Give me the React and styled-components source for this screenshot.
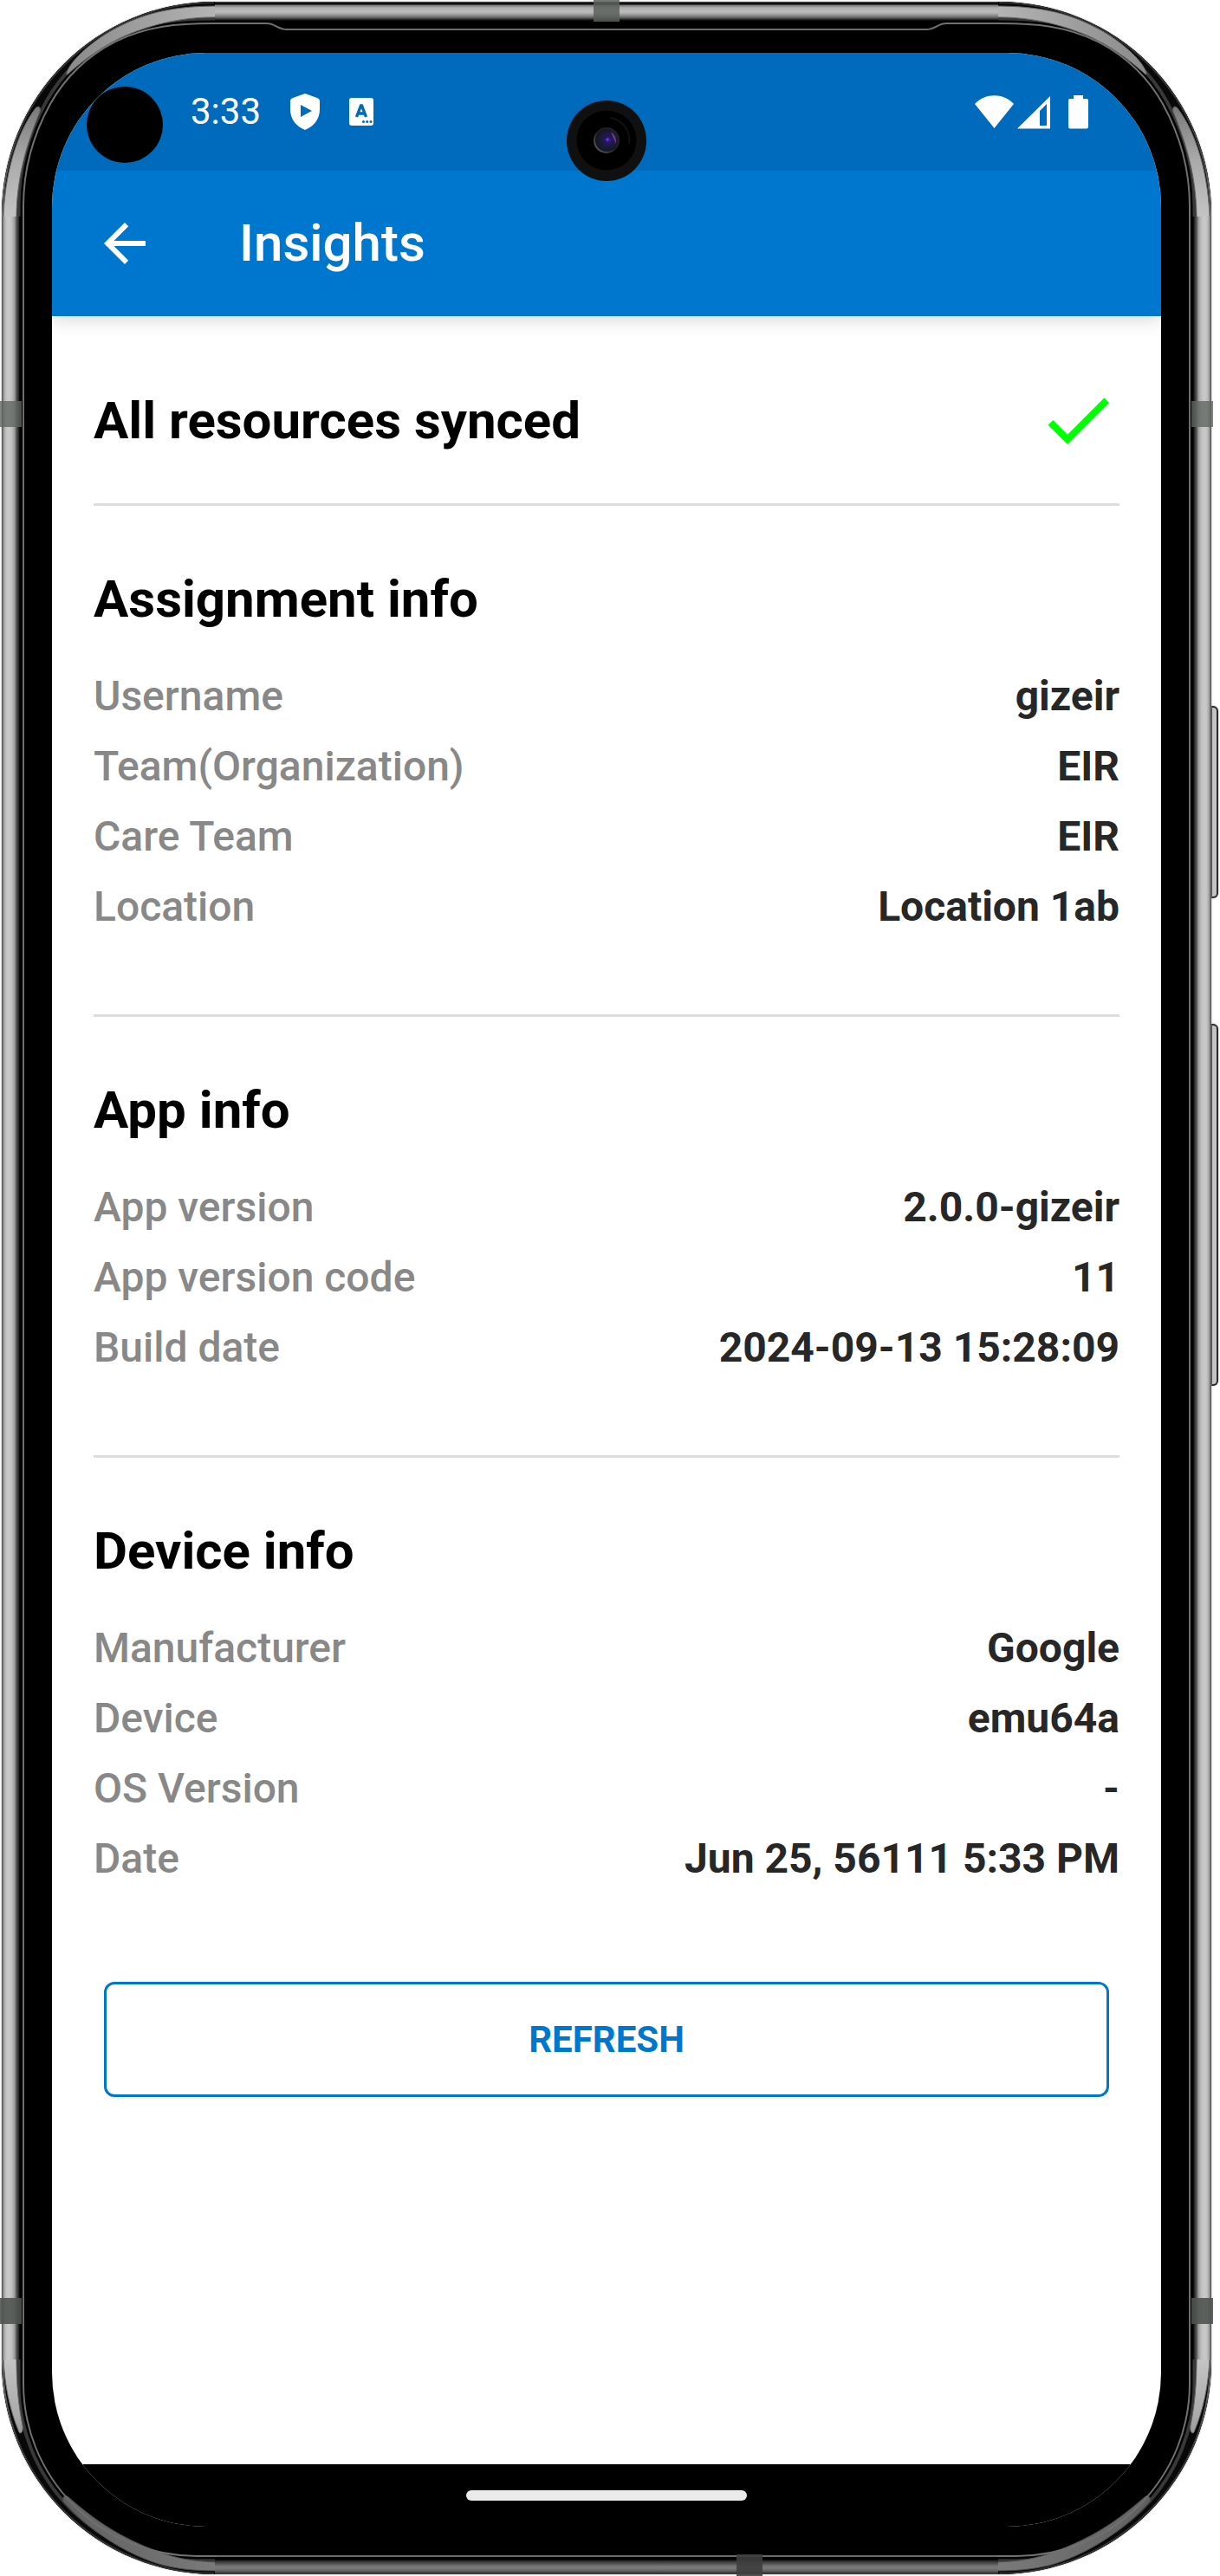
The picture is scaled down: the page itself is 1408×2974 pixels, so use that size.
import React from 'react';
import styled, { createGlobalStyle } from 'styled-components';

const GlobalStyle = createGlobalStyle`
  * { box-sizing: border-box; }
  body { margin: 0; background: #fff; font-family: Roboto, "Liberation Sans", sans-serif; }
`;

/* ---------- phone hardware ---------- */

const Device = styled.div`
  position: relative;
  display: flex;
  min-height: 100vh;
  margin-right: 8px;
  padding: 2px;
`;

const Chassis = styled.div`
  position: relative;
  display: flex;
  flex: 1;
  min-width: 0;
  padding: 59px 58px 55px;
  overflow: hidden;
  border-radius: 245px;
  box-shadow: 0 0 2px #8a8a8a;
  background:
    linear-gradient(#6a6a6a, #6a6a6a) center 31px / calc(100% - 656px) 2px no-repeat,
    linear-gradient(to bottom, #555 0, #000 2px, #111 3px, #777 4px, #b0b0b0 7px, #bcbcbc 12px, #9a9a9a 15px, #6a6a6a 18px, #333 20px, #000 22px) center top / calc(100% - 490px) 22px no-repeat,
    linear-gradient(to top, #555 0, #2a2a2a 1px, #555 3px, #757575 6px, #7a7a7a 9px, #555 12px, #333 15px, #000 17px, #000 20px, #6a6a6a 20px, #6a6a6a 22px) center bottom / calc(100% - 490px) 22px no-repeat,
    linear-gradient(to right, #666 0, #555 1px, #999 2px, #c2c2c2 5px, #cacaca 8px, #bcbcbc 12px, #999 15px, #555 17px, #333 19px, #000 21px, #000 24px, #6e6e6e 24px, #6e6e6e 26px, #000 26px) left center / 28px calc(100% - 490px) no-repeat,
    linear-gradient(to left, #666 0, #555 1px, #999 2px, #c2c2c2 5px, #cacaca 8px, #bcbcbc 12px, #999 15px, #555 17px, #333 19px, #000 21px, #000 24px, #6e6e6e 24px, #6e6e6e 26px, #000 26px) right center / 28px calc(100% - 490px) no-repeat,
    #000;
`;

const CornerArt = styled.svg`
  position: absolute;
  width: 330px;
  height: 248px;
  ${(p) => (p.$bottom ? 'bottom: 0;' : 'top: 0;')}
  ${(p) => (p.$right ? 'right: 0;' : 'left: 0;')}
  transform: scale(${(p) => (p.$right ? -1 : 1)}, ${(p) => (p.$bottom ? -1 : 1)});
`;

const AntennaBand = styled.span`
  position: absolute;
  background: ${(p) => p.$tone};
  ${(p) => (p.$horizontal ? 'width: 30px; height: 25px;' : 'width: 25px; height: 30px;')}
  ${(p) => p.$edge}: 0;
  ${(p) => p.$from}: ${(p) => p.$at};
`;

const SideKey = styled.span`
  position: absolute;
  right: -6px;
  top: ${(p) => p.$top}px;
  width: 9px;
  height: ${(p) => p.$length}px;
  border: 2px solid #2b2b2b;
  border-left-color: #444;
  border-radius: 0 6px 6px 0;
  background: #c4c4c4;
  box-shadow: 0 0 2px #999;
`;

/* ---------- screen ---------- */

const Screen = styled.div`
  position: relative;
  display: flex;
  flex-direction: column;
  flex: 1;
  min-width: 0;
  overflow: hidden;
  border-radius: 178px;
  background: #fff;
`;

const StatusBar = styled.div`
  display: flex;
  align-items: center;
  justify-content: space-between;
  height: 136px;
  padding: 0 84px 0 160px;
  background: #006bbc;
  color: #fff;
`;

const StatusGroup = styled.div`
  display: flex;
  align-items: center;
  gap: ${(p) => p.$gap}px;
`;

const Clock = styled.span`
  font-size: 42px;
  line-height: 50px;
`;

const Cutout = styled.span`
  position: absolute;
  top: 39px;
  left: 40px;
  width: 88px;
  height: 88px;
  border-radius: 50%;
  background: #000;
`;

const CameraArt = styled.svg`
  position: absolute;
  top: 55px;
  left: calc(50% - 46px);
  width: 92px;
  height: 93px;
`;

const AppBar = styled.header`
  position: relative;
  display: flex;
  align-items: center;
  gap: 96px;
  height: 168px;
  padding: 0 48px;
  background: #0077cf;
  color: #fff;
  box-shadow: 0 4px 20px rgba(0, 0, 0, 0.16);
  clip-path: inset(0 0 -28px 0);
`;

const BackButton = styled.button`
  display: flex;
  padding: 0;
  border: 0;
  background: none;
  color: inherit;
  cursor: pointer;
`;

const Title = styled.h1`
  margin: 0;
  font-size: 60px;
  font-weight: 500;
  line-height: 70px;
`;

const Content = styled.main`
  flex: 1;
  padding: 0 48px;
`;

const SyncStatus = styled.section`
  display: flex;
  align-items: center;
  justify-content: space-between;
  padding: 72px 0 48px;
`;

const Heading = styled.h2`
  margin: 0;
  font-size: 60px;
  font-weight: 700;
  line-height: 71px;
  color: #000;
`;

const InfoSection = styled.section`
  padding: 72px 0 84px;
  border-top: 3px solid #ddd;
`;

const InfoList = styled.dl`
  margin: 36px 0 0;
`;

const InfoRow = styled.div`
  display: flex;
  justify-content: space-between;
  font-size: 48px;
  line-height: 81px;
`;

const Label = styled.dt`
  font-weight: 500;
  color: #888;
`;

const Value = styled.dd`
  margin: 0;
  font-weight: 700;
  color: #272727;
`;

const RefreshArea = styled.div`
  display: flex;
  padding: 18px 12px;
`;

const RefreshButton = styled.button`
  flex: 1;
  height: 133px;
  border: 3px solid #0077cf;
  border-radius: 12px;
  background: #fff;
  color: #0077cf;
  font-family: inherit;
  font-size: 42px;
  font-weight: 700;
  line-height: 50px;
  cursor: pointer;
`;

const NavigationBar = styled.div`
  display: flex;
  justify-content: center;
  align-items: center;
  height: 72px;
  background: #000;
`;

const HomeHandle = styled.span`
  width: 324px;
  height: 12px;
  border-radius: 6px;
  background: #ebebeb;
`;

/* ---------- drawings ---------- */

const TOP_SEAM = 'M27 250V238C27 200 36 160 58 120C76 88 102 64 133 48C170 30 205 27 245 27H250';
const BOTTOM_SEAM = 'M27 250V222A200 199 0 0 1 227 23H250';

function Corner({ bottom, right }) {
  const id = `corner-${bottom ? 'b' : 't'}${right ? 'r' : 'l'}`;
  const seam = bottom ? BOTTOM_SEAM : TOP_SEAM;
  return (
    <CornerArt $bottom={bottom} $right={right} viewBox="2 2 330 248" aria-hidden="true">
      <defs>
        <linearGradient id={`${id}-side`} gradientUnits="userSpaceOnUse" x1="0" y1="250" x2="0" y2="120">
          <stop offset="0" stopColor="#c4c4c4" />
          <stop offset="0.5" stopColor="#aaa" />
          <stop offset="1" stopColor="#777" />
        </linearGradient>
        <linearGradient id={`${id}-end`} gradientUnits="userSpaceOnUse" x1="250" y1="0" x2="75" y2="0">
          <stop offset="0" stopColor={bottom ? '#7a7a7a' : '#b4b4b4'} />
          <stop offset="1" stopColor={bottom ? '#606060' : '#8a8a8a'} />
        </linearGradient>
        <linearGradient id={`${id}-rim`} gradientUnits="userSpaceOnUse" x1="0" y1="250" x2="0" y2="130">
          <stop offset="0" stopColor="#707070" />
          <stop offset="1" stopColor="#333" />
        </linearGradient>
        <clipPath id={`${id}-clip`}>
          <rect x="2" y="2" width="246" height="248" />
        </clipPath>
      </defs>
      <g clipPath={`url(#${id}-clip)`}>
        <path d="M2 250V247A245 245 0 0 1 247 2H250V250Z" fill="#080808" />
        <path d={seam} fill="none" stroke="#383838" strokeWidth="15" />
        <path d={`${seam}V250Z`} fill="#000" stroke="#000" strokeWidth="7" />
        <path d="M3 250V247A244 244 0 0 1 247 3" fill="none" stroke={`url(#${id}-rim)`} strokeWidth="2" />
        {bottom ? (
          <>
            <path d="M4 252C5 222 11 192 22 166C25 163 27 168 26 174C21 198 19 222 19 252Z" fill={`url(#${id}-side)`} stroke="#666" strokeWidth="1" />
            <path d="M73 86C100 55 145 24 190 12C212 7 230 6 252 6V16C222 17 205 20 183 28C140 44 112 62 78 92C74 94 71 89 73 86Z" fill={`url(#${id}-end)`} stroke="#4a4a4a" strokeWidth="1" />
          </>
        ) : (
          <>
            <path d="M4 252C5 205 18 155 41 125C45 121 47 124 46 129C31 165 19 205 19 252Z" fill={`url(#${id}-side)`} stroke="#666" strokeWidth="1" />
            <path d="M77 84C82 68 110 45 133 33C170 13 205 7 252 7V20C215 19 178 27 145 41C120 52 98 68 80 84Q76 88 77 84Z" fill={`url(#${id}-end)`} stroke="#666" strokeWidth="1" />
          </>
        )}
      </g>
      <path
        d={bottom ? seam : `${seam}H308C318 27 320 34 332 34`}
        fill="none"
        stroke="#707070"
        strokeWidth="2"
      />
    </CornerArt>
  );
}

function Camera() {
  return (
    <CameraArt viewBox="0 0 92 93" aria-hidden="true">
      <defs>
        <radialGradient id="lens" cx="0.56" cy="0.48" r="0.55">
          <stop offset="0" stopColor="#4a1cb0" />
          <stop offset="0.25" stopColor="#261660" />
          <stop offset="0.6" stopColor="#1a1a34" />
          <stop offset="1" stopColor="#10151c" />
        </radialGradient>
        <linearGradient id="lensRim" x1="0" y1="1" x2="1" y2="0">
          <stop offset="0" stopColor="#666" />
          <stop offset="0.5" stopColor="#1c1c1c" />
          <stop offset="1" stopColor="#2a2030" />
        </linearGradient>
      </defs>
      <ellipse cx="46" cy="46.5" rx="46" ry="46.5" fill="#101010" />
      <circle cx="46" cy="46" r="34.5" fill="#000" />
      <path d="M50 20A26 26 0 0 1 72 50" fill="none" stroke="#101010" strokeWidth="2" />
      <circle cx="46" cy="46" r="14" fill="url(#lens)" stroke="url(#lensRim)" strokeWidth="2" />
      <path d="M51 36Q58 41 57 50Q53 42 51 36Z" fill="#8c4a9c" opacity="0.7" />
      <circle cx="47" cy="45" r="1.500" fill="#6a3cf0" />
    </CameraArt>
  );
}

const ShieldIcon = () => (
  <svg width="34" height="42" viewBox="0 0 34 42" aria-hidden="true">
    <path fill="#fff" fillRule="evenodd" d="M17 0L31 5Q34 6 34 9V18C34 30 27 38 17 42C7 38 0 30 0 18V9Q0 6 3 5ZM12 13V27L25 20Z" />
  </svg>
);

const KeyboardIcon = () => (
  <svg width="28" height="32" viewBox="0 0 28 32" aria-hidden="true">
    <rect width="28" height="32" rx="3" fill="#fff" />
    <path d="M8.500 22L13.500 9H14.500L19.500 22M10 18H18" fill="none" stroke="#006bbc" strokeWidth="3.400" />
    <g fill="#006bbc">
      <circle cx="16.500" cy="27.500" r="1.500" />
      <circle cx="20.700" cy="27.500" r="1.500" />
      <circle cx="25" cy="27.500" r="1.500" />
    </g>
  </svg>
);

const WifiIcon = () => (
  <svg width="45" height="39" viewBox="0 0 45 39" aria-hidden="true">
    <path fill="#fff" d="M0 10C12-3 33-3 45 10L22.500 38Z" />
  </svg>
);

const SignalIcon = () => (
  <svg width="38" height="39" viewBox="0 0 38 39" aria-hidden="true">
    <path fill="#fff" fillRule="evenodd" d="M38 1V38.500H0ZM34 10L26 18V35H34Z" />
  </svg>
);

const BatteryIcon = () => (
  <svg width="40" height="39" viewBox="0 0 40 39" aria-hidden="true">
    <path fill="#fff" d="M23 0H34V4H38Q40 4 40 6V36Q40 38.500 38 38.500H19Q17 38.500 17 36V6Q17 4 19 4H23Z" />
  </svg>
);

const BackIcon = () => (
  <svg width="72" height="72" viewBox="0 0 24 24" aria-hidden="true">
    <path fill="currentColor" d="M20 11H7.830l5.590-5.590L12 4l-8 8 8 8 1.410-1.410L7.830 13H20v-2z" />
  </svg>
);

const CheckIcon = () => (
  <svg width="96" height="96" viewBox="0 0 24 24" role="img" aria-label="Synced">
    <path fill="#0f0" d="M9 16.170L4.830 12l-1.420 1.410L9 19 21 7l-1.410-1.410z" />
  </svg>
);

/* ---------- data ---------- */

const sections = [
  {
    title: 'Assignment info',
    rows: [
      ['Username', 'gizeir'],
      ['Team(Organization)', 'EIR'],
      ['Care Team', 'EIR'],
      ['Location', 'Location 1ab'],
    ],
  },
  {
    title: 'App info',
    rows: [
      ['App version', '2.0.0-gizeir'],
      ['App version code', '11'],
      ['Build date', '2024-09-13 15:28:09'],
    ],
  },
  {
    title: 'Device info',
    rows: [
      ['Manufacturer', 'Google'],
      ['Device', 'emu64a'],
      ['OS Version', '-'],
      ['Date', 'Jun 25, 56111 5:33 PM'],
    ],
  },
];

export default function App() {
  return (
    <>
      <GlobalStyle />
      <Device>
        <SideKey $top={815} $length={222} />
        <SideKey $top={1182} $length={418} />
        <Chassis>
          <Corner />
          <Corner right />
          <Corner bottom />
          <Corner bottom right />
          <Screen>
            <StatusBar>
              <StatusGroup $gap={34}>
                <Clock>3:33</Clock>
                <ShieldIcon />
                <KeyboardIcon />
              </StatusGroup>
              <StatusGroup $gap={4}>
                <WifiIcon />
                <SignalIcon />
                <BatteryIcon />
              </StatusGroup>
            </StatusBar>
            <AppBar>
              <BackButton type="button" aria-label="Back">
                <BackIcon />
              </BackButton>
              <Title>Insights</Title>
            </AppBar>
            <Content>
              <SyncStatus>
                <Heading>All resources synced</Heading>
                <CheckIcon />
              </SyncStatus>
              {sections.map((section) => (
                <InfoSection key={section.title}>
                  <Heading>{section.title}</Heading>
                  <InfoList>
                    {section.rows.map(([label, value]) => (
                      <InfoRow key={label}>
                        <Label>{label}</Label>
                        <Value>{value}</Value>
                      </InfoRow>
                    ))}
                  </InfoList>
                </InfoSection>
              ))}
              <RefreshArea>
                <RefreshButton type="button">REFRESH</RefreshButton>
              </RefreshArea>
            </Content>
            <NavigationBar>
              <HomeHandle />
            </NavigationBar>
            <Cutout />
            <Camera />
          </Screen>
        </Chassis>
        <AntennaBand $horizontal $edge="top" $from="left" $at="calc(50% - 15px)" $tone="rgba(92, 96, 92, 0.85)" />
        <AntennaBand $horizontal $edge="bottom" $from="right" $at="520px" $tone="rgba(62, 62, 62, 0.9)" />
        <AntennaBand $edge="left" $from="top" $at="463px" $tone="rgba(98, 102, 98, 0.8)" />
        <AntennaBand $edge="right" $from="top" $at="463px" $tone="rgba(98, 102, 98, 0.8)" />
        <AntennaBand $edge="left" $from="bottom" $at="291px" $tone="rgba(80, 84, 80, 0.9)" />
        <AntennaBand $edge="right" $from="bottom" $at="291px" $tone="rgba(80, 84, 80, 0.9)" />
      </Device>
    </>
  );
}
